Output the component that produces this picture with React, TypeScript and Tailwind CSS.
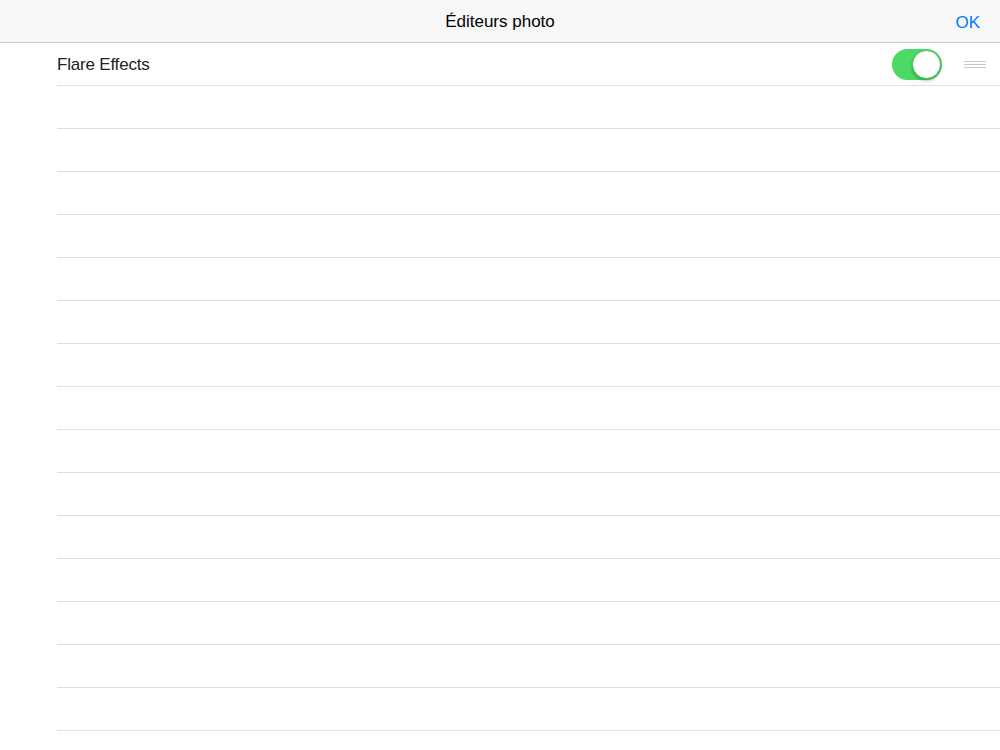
import React from "react";

export default function App() {
  const rows = Array.from({ length: 16 });
  return (
    <div className="w-[1000px] h-[750px] bg-white overflow-hidden" style={{ fontFamily: '"Helvetica Neue", "Liberation Sans", Arial, sans-serif' }}>
      <div className="h-[43px] bg-[#f7f7f7] border-b border-[#c8c8cc] relative flex items-center justify-center pt-[2px]">
        <span className="text-[17px] text-black">Éditeurs photo</span>
        <span className="absolute right-[20px] top-[10px] text-[17px] text-[#007aff]">OK</span>
      </div>
      <div className="pl-[57px]">
        <div className="h-[43px] border-b border-[#e0e0e3] flex items-center">
          <span className="text-[17px] text-[#222] flex-1 tracking-[-0.2px] pt-[1px]">Flare Effects</span>
          <div className="w-[50px] h-[31px] rounded-full bg-[#4cd964] relative mr-[22px]">
            <div className="absolute right-[1px] top-[1px] w-[29px] h-[29px] rounded-full bg-white shadow-[0_2px_3px_rgba(0,0,0,0.25)] border border-[#3fbf55]" />
          </div>
          <div className="w-[22px] mr-[14px] flex flex-col gap-[2px]">
            <div className="h-[1px] bg-[#c7c7cc]" />
            <div className="h-[1px] bg-[#c7c7cc]" />
            <div className="h-[1px] bg-[#c7c7cc]" />
          </div>
        </div>
        {rows.slice(1).map((_, i) => (
          <div key={i} className="h-[43px] border-b border-[#e0e0e3]" />
        ))}
      </div>
    </div>
  );
}
